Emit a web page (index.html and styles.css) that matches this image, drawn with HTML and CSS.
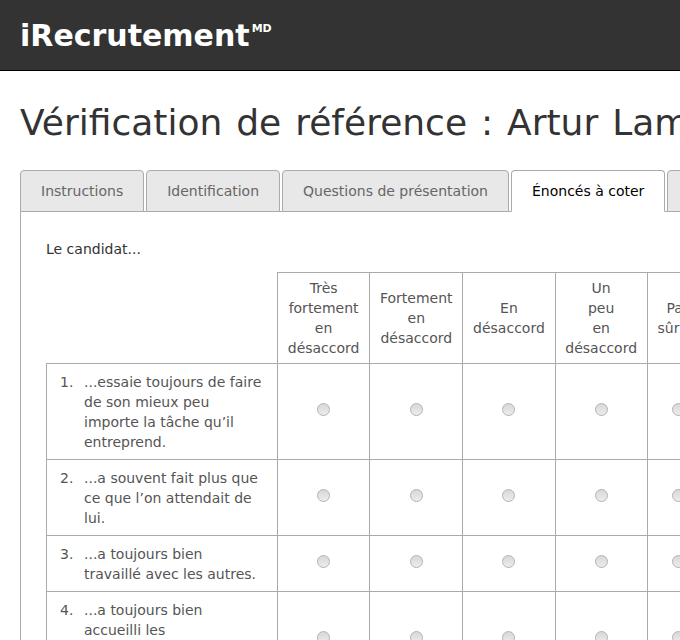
FILE: index.html
```html
<!DOCTYPE html>
<html lang="fr">
<head>
  <meta charset="UTF-8">
  <meta name="viewport" content="width=device-width, initial-scale=1">
  <title>Vérification de référence</title>
  <link rel="stylesheet" href="styles.css">
</head>
<body>

<header class="topbar">
  <span class="logo">iRecrutement<sup>MD</sup></span>
</header>

<div class="page">
  <h1 class="title">Vérification de référence : Artur Lambert</h1>

  <ul class="tabs">
    <li class="tab">Instructions</li>
    <li class="tab">Identification</li>
    <li class="tab">Questions de présentation</li>
    <li class="tab active">Énoncés à coter</li>
    <li class="tab">Commentaires</li>
  </ul>

  <div class="panel">
    <p class="lead">Le candidat...</p>

    <table class="scale">
      <thead>
        <tr>
          <th class="blank"></th>
          <th>Très fortement en désaccord</th>
          <th>Fortement en désaccord</th>
          <th>En désaccord</th>
          <th>Un<br>peu<br>en<br>désaccord</th>
          <th>Pas sûr(e)</th>
          <th>Un<br>peu<br>d’accord</th>
          <th>D’accord</th>
          <th>Fortement d’accord</th>
          <th>Très fortement d’accord</th>
        </tr>
      </thead>
      <tbody>
        <tr>
          <td class="item"><div class="stmt"><span class="num">1.</span><span class="text">...essaie toujours de faire de son mieux peu importe la tâche qu’il entreprend.</span></div></td>
          <td><input type="radio" name="q1"></td>
          <td><input type="radio" name="q1"></td>
          <td><input type="radio" name="q1"></td>
          <td><input type="radio" name="q1"></td>
          <td><input type="radio" name="q1"></td>
          <td><input type="radio" name="q1"></td>
          <td><input type="radio" name="q1"></td>
          <td><input type="radio" name="q1"></td>
          <td><input type="radio" name="q1"></td>
        </tr>
        <tr>
          <td class="item"><div class="stmt"><span class="num">2.</span><span class="text">...a souvent fait plus que ce que l’on attendait de lui.</span></div></td>
          <td><input type="radio" name="q2"></td>
          <td><input type="radio" name="q2"></td>
          <td><input type="radio" name="q2"></td>
          <td><input type="radio" name="q2"></td>
          <td><input type="radio" name="q2"></td>
          <td><input type="radio" name="q2"></td>
          <td><input type="radio" name="q2"></td>
          <td><input type="radio" name="q2"></td>
          <td><input type="radio" name="q2"></td>
        </tr>
        <tr>
          <td class="item"><div class="stmt"><span class="num">3.</span><span class="text">...a toujours bien travaillé avec les autres.</span></div></td>
          <td><input type="radio" name="q3"></td>
          <td><input type="radio" name="q3"></td>
          <td><input type="radio" name="q3"></td>
          <td><input type="radio" name="q3"></td>
          <td><input type="radio" name="q3"></td>
          <td><input type="radio" name="q3"></td>
          <td><input type="radio" name="q3"></td>
          <td><input type="radio" name="q3"></td>
          <td><input type="radio" name="q3"></td>
        </tr>
        <tr>
          <td class="item"><div class="stmt"><span class="num">4.</span><span class="text">...a toujours bien accueilli les commentaires constructifs.</span></div></td>
          <td><input type="radio" name="q4"></td>
          <td><input type="radio" name="q4"></td>
          <td><input type="radio" name="q4"></td>
          <td><input type="radio" name="q4"></td>
          <td><input type="radio" name="q4"></td>
          <td><input type="radio" name="q4"></td>
          <td><input type="radio" name="q4"></td>
          <td><input type="radio" name="q4"></td>
          <td><input type="radio" name="q4"></td>
        </tr>
      </tbody>
    </table>
  </div>
</div>

</body>
</html>
```

FILE: styles.css
```css
html {
  overflow: hidden;
}
body {
  margin: 0;
  font-family: "DejaVu Sans", Verdana, sans-serif;
  font-size: 14px;
  color: #333;
  background: #fff;
}
.topbar {
  height: 70px;
  background: #333;
  border-bottom: 1px solid #000;
  display: flex;
  align-items: center;
  padding: 0 20px;
}
.logo {
  color: #fff;
  font-size: 30px;
  font-weight: bold;
  line-height: 35px;
}
.logo sup {
  font-size: 11px;
  line-height: 0;
  vertical-align: 14px;
  margin-left: 2px;
}
.page {
  width: 1100px;
  padding: 0 20px;
}
.title {
  font-size: 36px;
  font-weight: normal;
  line-height: 42px;
  word-spacing: 2.5px;
  margin: 31px 0 26px;
  white-space: nowrap;
  color: #333;
}
.tabs {
  list-style: none;
  margin: 0 0 -1px;
  padding: 0;
  display: flex;
  gap: 2px;
}
.tab {
  padding: 10px 20px;
  line-height: 20px;
  border: 1px solid #aaa;
  border-radius: 4px 4px 0 0;
  background: #e8e8e8;
  color: #666;
}
.tab.active {
  background: #fff;
  color: #000;
  border-bottom-color: #fff;
}
.panel {
  border: 1px solid #aaa;
  padding: 27px 25px 25px;
}
.lead {
  margin: 0 0 13px;
  line-height: 20px;
}
.scale {
  border-collapse: collapse;
  width: 1px;
  color: #555;
}
.scale th,
.scale td {
  border: 1px solid #aaa;
  padding: 5px 9.75px;
  line-height: 20px;
  text-align: center;
  vertical-align: middle;
  font-weight: normal;
}
.scale td {
  padding: 8px 9.75px 7px;
}
.scale th.blank {
  border: none;
}
.scale td.item {
  width: 203px;
  padding: 8px 14px 7px 13px;
  text-align: left;
}
.stmt {
  display: flex;
}
.num {
  flex: none;
  width: 24px;
}
.text {
  width: 179px;
}
.scale input[type="radio"] {
  appearance: none;
  -webkit-appearance: none;
  width: 13px;
  height: 13px;
  margin: 0 0 1px;
  border: 1px solid #b4b4b4;
  border-radius: 50%;
  background: linear-gradient(#d8d8d8, #ececec);
  vertical-align: baseline;
}
```
